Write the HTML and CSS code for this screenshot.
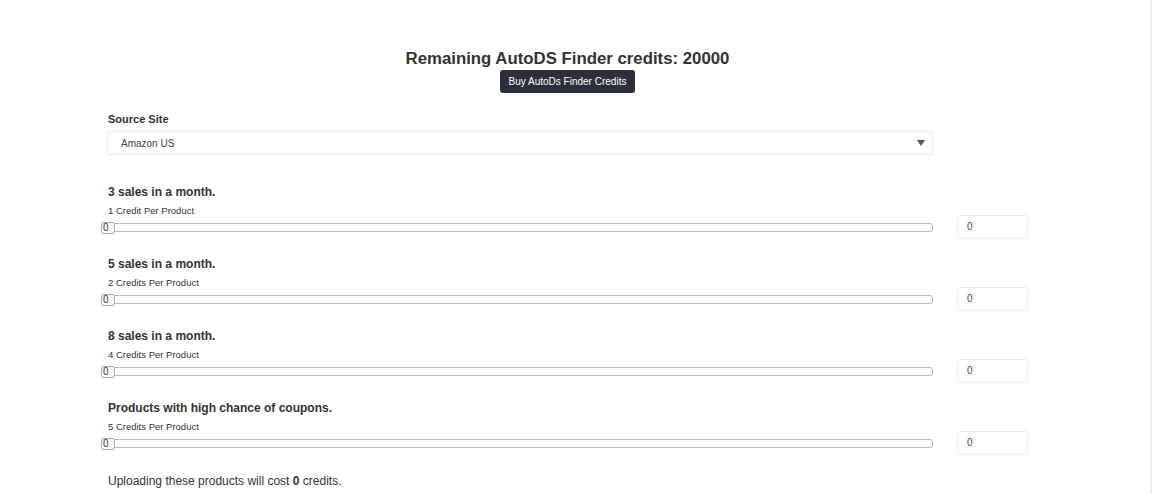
FILE: index.html
```html
<!DOCTYPE html>
<html>
<head>
<meta charset="utf-8">
<link rel="stylesheet" href="styles.css">
</head>
<body>
<div class="page">
  <div class="top">
    <h1 class="title">Remaining AutoDS Finder credits: 20000</h1>
    <button class="buy">Buy AutoDs Finder Credits</button>
  </div>
  <div class="form">
    <div class="label">Source Site</div>
    <div class="select">
      <span>Amazon US</span>
      <svg class="arrow" width="8" height="6" viewBox="0 0 8 6"><path d="M0 0H8L4 6Z" fill="#555"/></svg>
    </div>

    <div class="blocks">
      <div class="block">
        <div class="left">
          <div class="bh">3 sales in a month.</div>
          <div class="sub">1 Credit Per Product</div>
          <div class="track"><span class="handle">0</span></div>
        </div>
        <div class="num">0</div>
      </div>

      <div class="block">
        <div class="left">
          <div class="bh">5 sales in a month.</div>
          <div class="sub">2 Credits Per Product</div>
          <div class="track"><span class="handle">0</span></div>
        </div>
        <div class="num">0</div>
      </div>

      <div class="block">
        <div class="left">
          <div class="bh">8 sales in a month.</div>
          <div class="sub">4 Credits Per Product</div>
          <div class="track"><span class="handle">0</span></div>
        </div>
        <div class="num">0</div>
      </div>

      <div class="block">
        <div class="left">
          <div class="bh">Products with high chance of coupons.</div>
          <div class="sub">5 Credits Per Product</div>
          <div class="track"><span class="handle">0</span></div>
        </div>
        <div class="num">0</div>
      </div>
    </div>

    <div class="cost">Uploading these products will cost <b>0</b> credits.</div>
  </div>
</div>
</body>
</html>
```

FILE: styles.css
```css
html, body {
  margin: 0;
  padding: 0;
  background: #fff;
}
body {
  font-family: "Liberation Sans", Arial, sans-serif;
  color: #333;
  width: 1150px;
  height: 494px;
  border-right: 2px solid #ececec;
  overflow: hidden;
}
.page {
  padding-top: 49px;
}
.top {
  width: 1135px;
  display: flex;
  flex-direction: column;
  align-items: center;
}
.title {
  margin: 0;
  font-size: 16.8px;
  line-height: 20px;
  font-weight: bold;
  color: #333;
}
.buy {
  margin-top: 1px;
  height: 23px;
  width: 135px;
  padding: 0;
  border: none;
  border-radius: 3px;
  background: #2b2f3b;
  color: #fff;
  font-family: "Liberation Sans", Arial, sans-serif;
  font-size: 10px;
}
.form {
  padding-left: 107px;
  width: 921px;
}
.label {
  margin-top: 19px;
  padding-left: 1px;
  font-size: 11px;
  line-height: 14px;
  font-weight: bold;
  color: #333;
}
.select {
  margin-top: 5px;
  height: 22px;
  border: 1px solid #e8e8e8;
  border-radius: 3px;
  display: flex;
  align-items: center;
  justify-content: space-between;
  padding: 0 7px 0 13px;
  width: 804px;
  font-size: 10px;
  color: #444;
}
.arrow {
  display: block;
}
.blocks {
  margin-top: 29px;
  display: flex;
  flex-direction: column;
  gap: 17px;
}
.block {
  display: flex;
  align-items: flex-end;
}
.block .left {
  width: 826px;
}
.bh {
  padding-left: 1px;
  font-size: 12px;
  line-height: 16px;
  font-weight: bold;
  color: #333;
}
.sub {
  margin-top: 5px;
  padding-left: 1px;
  font-size: 9.5px;
  line-height: 11px;
  color: #333;
}
.track {
  margin-top: 7px;
  margin-bottom: 7px;
  margin-left: -6px;
  width: 830px;
  height: 7px;
  border: 1px solid #bdbdbd;
  border-radius: 3px;
  position: relative;
  background: #fff;
}
.handle {
  position: absolute;
  left: -1px;
  top: -2px;
  width: 11px;
  height: 10px;
  border: 1px solid #aaa;
  border-radius: 2px;
  background: #f7f7f7;
  font-size: 10px;
  line-height: 10px;
  padding-left: 1px;
  color: #333;
}
.num {
  margin-left: 24px;
  width: 60px;
  height: 22px;
  border: 1px solid #e8e8e8;
  border-radius: 3px;
  padding-left: 9px;
  font-size: 10px;
  line-height: 22px;
  color: #3e4380;
}
.cost {
  margin-top: 19px;
  padding-left: 1px;
  font-size: 12px;
  line-height: 14px;
  color: #333;
}
.cost b {
  font-weight: bold;
}
```
